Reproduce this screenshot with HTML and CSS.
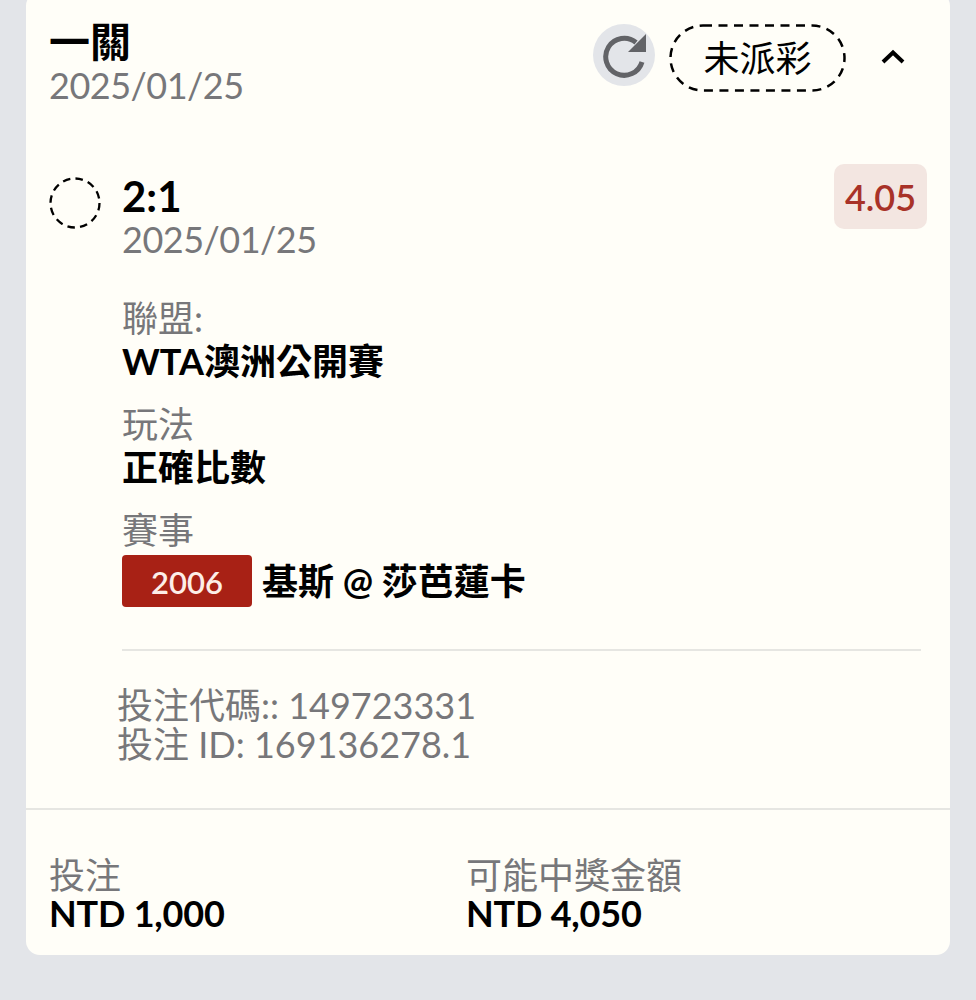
FILE: index.html
```html
<!DOCTYPE html>
<html lang="zh-Hant">
<head>
    <meta charset="UTF-8">
    <meta name="viewport" content="width=device-width, initial-scale=1.0">
    <title>Bet Slip</title>
    <link rel="stylesheet" href="styles.css">
</head>
<body>

<div class="card">
    <div class="card-head">
        <div class="head-title">
            <div class="title">一關</div>
            <div class="date">2025/01/25</div>
        </div>
        <div class="head-actions">
            <div class="refresh">
                <svg width="46" height="46" viewBox="0 0 46 46">
                    <path d="M41 30A18.500 18.500 0 1 1 35 10.500" fill="none" stroke="#626367" stroke-width="5"/>
                    <path d="M45 2V20H27Z" fill="#626367"/>
                </svg>
            </div>
            <div class="status">
                <!-- dashes are longer than what border: dashed draws -->
                <svg class="status-line" width="177" height="68" viewBox="0 0 177 68">
                    <rect x="1.500" y="1.500" width="174" height="65" rx="32.500" fill="none" stroke="#000" stroke-width="2.500" stroke-dasharray="9 6.500"/>
                </svg>
                未派彩
            </div>
            <svg class="chevron" width="26" height="20" viewBox="0 0 26 20">
                <path d="M3 15L13 5.500L23 15" fill="none" stroke="#000" stroke-width="4"/>
            </svg>
        </div>
    </div>

    <div class="leg">
        <svg class="leg-dot" width="52" height="52" viewBox="0 0 52 52">
            <circle cx="26" cy="26" r="24.500" fill="none" stroke="#000" stroke-width="2.300" stroke-dasharray="7.500 5.300"/>
        </svg>
        <div class="leg-body">
            <div class="leg-top">
                <div class="leg-name">
                    <div class="title score">2:1</div>
                    <div class="date">2025/01/25</div>
                </div>
                <div class="odds">4.05</div>
            </div>
            <div class="field">
                <div class="label">聯盟:</div>
                <div class="value">WTA澳洲公開賽</div>
            </div>
            <div class="field">
                <div class="label">玩法</div>
                <div class="value">正確比數</div>
            </div>
            <div class="field">
                <div class="label">賽事</div>
                <div class="match">
                    <span class="match-no">2006</span>
                    <span class="value">基斯 @ 莎芭蓮卡</span>
                </div>
            </div>
        </div>
    </div>

    <div class="codes">
        <div>投注代碼:: 149723331</div>
        <div>投注 ID: 169136278.1</div>
    </div>

    <div class="totals">
        <div class="total">
            <div class="label">投注</div>
            <div class="amount">NTD 1,000</div>
        </div>
        <div class="total">
            <div class="label">可能中獎金額</div>
            <div class="amount">NTD 4,050</div>
        </div>
    </div>
</div>

</body>
</html>
```
FILE: styles.css
```css
body {
    margin: 0;
    height: 1000px;
    overflow: hidden;
    background-color: #e3e5e9;
    font-family: Lato, "Noto Sans CJK TC", sans-serif;
    color: #000;
}
.card {
    margin: -8px 26px 0;
    height: 963px;
    box-sizing: border-box;
    background-color: #fffef8;
    border-radius: 14px;
    display: flex;
    flex-direction: column;
}
.card-head {
    display: flex;
    justify-content: space-between;
    padding: 28px 24px 0 23px;
}
.title {
    font-size: 41px;
    font-weight: 700;
    line-height: 44px;
    margin-bottom: 1px;
}
.score {
    font-size: 42px;
}
.date {
    font-size: 36px;
    letter-spacing: -0.5px;
    line-height: 40px;
    color: #77777a;
}
.head-actions {
    display: flex;
    align-items: flex-start;
}
.refresh {
    width: 62px;
    height: 62px;
    margin-top: 4px;
    border-radius: 50%;
    background-color: #e3e5e9;
    display: flex;
    align-items: center;
    justify-content: center;
}
.status {
    position: relative;
    margin: 4px 0 0 14px;
    width: 177px;
    height: 68px;
    font-size: 36px;
    line-height: 68px;
    text-align: center;
}
.status-line {
    position: absolute;
    top: 0;
    left: 0;
}
.chevron {
    margin: 27px 20px 0 34px;
}
.leg {
    display: flex;
    margin-top: 59px;
    padding: 0 23px 0 23px;
}
.leg-dot {
    margin-top: 13px;
    flex: none;
}
.leg-body {
    flex: 1;
    margin-left: 21px;
}
.leg-top {
    display: flex;
    justify-content: space-between;
}
.leg-name {
    padding-top: 10px;
}
.odds {
    width: 93px;
    height: 65px;
    border-radius: 10px;
    background-color: #f3e6e1;
    color: #a83228;
    font-size: 36px;
    font-weight: 600;
    line-height: 66px;
    text-align: center;
}
.field {
    margin-top: 20px;
}
.leg-top + .field {
    margin-top: 38px;
}
.label {
    font-size: 36px;
    line-height: 42px;
    color: #77777a;
}
.value {
    font-size: 36px;
    font-weight: 700;
    line-height: 44px;
}
.match {
    display: flex;
    align-items: center;
    gap: 10px;
    margin: 4px 6px 0 0;
    padding-bottom: 42px;
    border-bottom: 2px solid #e6e6e2;
}
.match-no {
    width: 130px;
    height: 52px;
    border-radius: 4px;
    background-color: #a82115;
    color: #fdeee8;
    font-size: 31px;
    font-weight: 600;
    line-height: 54px;
    text-align: center;
}
.codes {
    padding: 35px 24px 44px 91px;
    font-size: 36px;
    line-height: 39px;
    color: #77777a;
    border-bottom: 2px solid #e6e6e2;
}
.totals {
    display: grid;
    grid-template-columns: 417px 1fr;
    padding: 46px 23px 0;
}
.total .label {
    line-height: 38px;
}
.amount {
    font-size: 36px;
    font-weight: 700;
    letter-spacing: -0.2px;
    line-height: 38px;
}
```
